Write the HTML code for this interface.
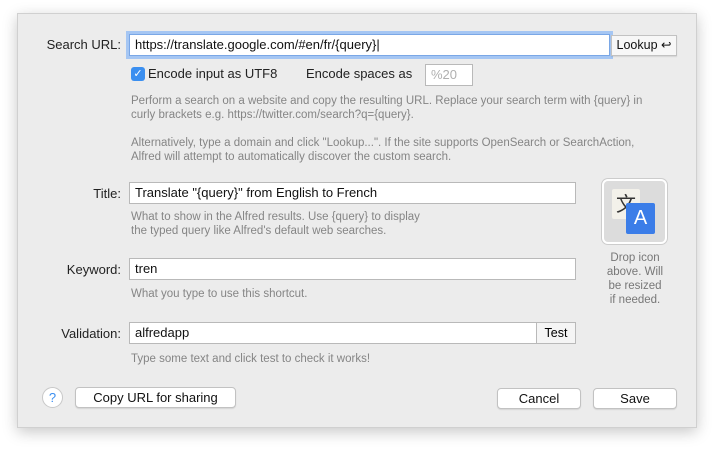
<!DOCTYPE html>
<html><head><style>
body{margin:0;width:714px;height:450px;background:#fff;font-family:"Liberation Sans",sans-serif;position:relative;overflow:hidden}
.win{position:absolute;left:17px;top:13px;width:680px;height:415px;background:#ececec;border:1px solid #d0d0d0;box-shadow:0 4px 14px rgba(0,0,0,.22);box-sizing:border-box}
.a{position:absolute}
.lbl{font-size:13px;color:#222;text-align:right;width:110px;left:11px}
.inp{background:#fff;border:1px solid #b9b9b9;box-sizing:border-box;font-size:13px;color:#111;padding:2px 5px;line-height:16px}
.help{font-size:11.5px;color:#858585;line-height:14px}
.btn{background:#fff;border:1px solid #c2c2c2;border-radius:4px;box-sizing:border-box;font-size:13px;color:#111;text-align:center;box-shadow:0 1px 1px rgba(0,0,0,.1)}
</style></head><body>
<div class="win"></div>
<div class="a lbl" style="top:37px">Search URL:</div>
<div class="a inp" style="left:129px;top:34px;width:481px;height:22px;border:1px solid #7aa7e6;box-shadow:0 0 0 3px #a5c6f3">https://translate.google.com/#en/fr/{query}|</div>
<div class="a btn" style="left:611px;top:35px;width:66px;height:21px;border-radius:0;line-height:19px;font-size:12.5px;background:#f7f7f7">Lookup ↩</div>
<div class="a" style="left:131px;top:67px;width:14px;height:14px;background:#3b8ff0;border-radius:3px;color:#fff;font-size:11px;line-height:14px;text-align:center">✓</div>
<div class="a" style="left:148px;top:66px;font-size:13px;color:#222">Encode input as UTF8</div>
<div class="a" style="left:306px;top:66px;font-size:13px;color:#222">Encode spaces as</div>
<div class="a inp" style="left:425px;top:64px;width:48px;height:22px;color:#b0b0b0">%20</div>
<div class="a help" style="left:131px;top:94px;width:530px">Perform a search on a website and copy the resulting URL. Replace your search term with {query} in curly brackets e.g. https://twitter.com/search?q={query}.<br><br>Alternatively, type a domain and click "Lookup...". If the site supports OpenSearch or SearchAction, Alfred will attempt to automatically discover the custom search.</div>
<div class="a lbl" style="top:186px">Title:</div>
<div class="a inp" style="left:129px;top:182px;width:447px;height:22px">Translate "{query}" from English to French</div>
<div class="a help" style="left:131px;top:210px">What to show in the Alfred results. Use {query} to display<br>the typed query like Alfred's default web searches.</div>
<div class="a lbl" style="top:262px">Keyword:</div>
<div class="a inp" style="left:129px;top:258px;width:447px;height:22px">tren</div>
<div class="a help" style="left:131px;top:287px">What you type to use this shortcut.</div>
<div class="a lbl" style="top:326px">Validation:</div>
<div class="a inp" style="left:129px;top:322px;width:408px;height:22px">alfredapp</div>
<div class="a" style="left:536px;top:322px;width:40px;height:22px;border:1px solid #b9b9b9;box-sizing:border-box;background:#f5f5f5;font-size:12.5px;text-align:center;line-height:20px">Test</div>
<div class="a help" style="left:131px;top:352px">Type some text and click test to check it works!</div>
<div class="a" style="left:602px;top:179px;width:65px;height:65px;border:2px solid #fff;border-radius:6px;background:#dcdcdc;box-sizing:border-box;box-shadow:0 0 0 1px #ccc">
 <div class="a" style="left:8px;top:8px;width:28px;height:30px;background:#f3f1ea;border-radius:2px;font-size:20px;line-height:28px;text-align:center;color:#333;font-family:'Noto Sans CJK SC',sans-serif">文</div>
 <div class="a" style="left:22px;top:22px;width:29px;height:31px;background:#3b7de8;border-radius:2px;color:#fff;font-size:20px;line-height:31px;text-align:center">A</div>
</div>
<div class="a" style="left:594px;top:251px;width:82px;text-align:center;font-size:11.5px;color:#777;line-height:14px">Drop icon<br>above. Will<br>be resized<br>if needed.</div>
<div class="a" style="left:42px;top:387px;width:19px;height:19px;border:1px solid #c8c8c8;border-radius:50%;background:#fff;color:#3b8ff0;font-size:13px;text-align:center;line-height:19px">?</div>
<div class="a btn" style="left:75px;top:387px;width:161px;height:21px;line-height:19px">Copy URL for sharing</div>
<div class="a btn" style="left:497px;top:388px;width:84px;height:21px;line-height:19px">Cancel</div>
<div class="a btn" style="left:593px;top:388px;width:84px;height:21px;line-height:19px">Save</div>
</body></html>
